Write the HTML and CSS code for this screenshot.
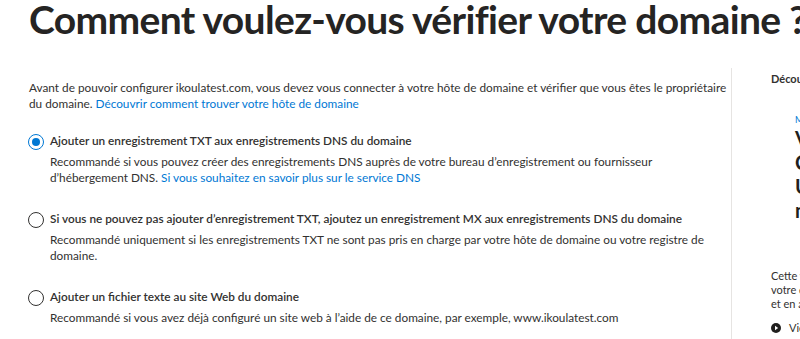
FILE: index.html
```html
<!DOCTYPE html>
<html lang="fr">
<head>
<meta charset="utf-8">
<title>Vérifier le domaine</title>
<link rel="stylesheet" href="styles.css">
</head>
<body>
<div class="page">
  <h1 class="title">Comment voulez-vous vérifier votre domaine ?</h1>
  <div class="layout">
    <main class="main">
      <p class="intro">Avant de pouvoir configurer ikoulatest.com, vous devez vous connecter à votre hôte de domaine et vérifier que vous êtes le propriétaire du domaine. <a class="link" href="#">Découvrir comment trouver votre hôte de domaine</a></p>
      <div class="options">
        <div class="option">
          <span class="radio radio-on"></span>
          <div class="option-body">
            <div class="option-label">Ajouter un enregistrement TXT aux enregistrements DNS du domaine</div>
            <div class="option-desc">Recommandé si vous pouvez créer des enregistrements DNS auprès de votre bureau d’enregistrement ou fournisseur d’hébergement DNS. <a class="link" href="#">Si vous souhaitez en savoir plus sur le service DNS</a></div>
          </div>
        </div>
        <div class="option">
          <span class="radio"></span>
          <div class="option-body">
            <div class="option-label">Si vous ne pouvez pas ajouter d’enregistrement TXT, ajoutez un enregistrement MX aux enregistrements DNS du domaine</div>
            <div class="option-desc">Recommandé uniquement si les enregistrements TXT ne sont pas pris en charge par votre hôte de domaine ou votre registre de domaine.</div>
          </div>
        </div>
        <div class="option">
          <span class="radio"></span>
          <div class="option-body">
            <div class="option-label">Ajouter un fichier texte au site Web du domaine</div>
            <div class="option-desc">Recommandé si vous avez déjà configuré un site web à l’aide de ce domaine, par exemple, www.ikoulatest.com</div>
          </div>
        </div>
      </div>
    </main>
    <aside class="side">
      <div class="side-title">Découvrir</div>
      <div class="card">
        <div class="card-kicker">Microsoft 365</div>
        <div class="card-head">
          <span class="card-line">Vérifier votre</span>
          <span class="card-line">Comment ajouter</span>
          <span class="card-line">Un enregistrement</span>
          <span class="card-line">nom de domaine</span>
        </div>
      </div>
      <p class="side-text">Cette vidéo montre comment vérifier<br>votre domaine auprès de votre hôte<br>et en ajoutant un enregistrement.</p>
      <div class="side-video">
        <svg class="play" width="10" height="10" viewBox="0 0 10 10" aria-hidden="true"><circle cx="5" cy="5" r="5" fill="#201f1e"/><path d="M4 2.8 L7.2 5 L4 7.2 Z" fill="#fff"/></svg>
        <span>Vidéo : vérifier votre domaine</span>
      </div>
    </aside>
  </div>
</div>
</body>
</html>
```
FILE: styles.css
```css
html, body {
  margin: 0;
  padding: 0;
  background: #ffffff;
  overflow: hidden;
}
body {
  font-family: "Lato", "Open Sans", sans-serif;
  color: #323130;
  width: 800px;
  height: 339px;
}
.page {
  padding-left: 29px;
}
.title {
  margin: 0;
  font-size: 39px;
  font-weight: 700;
  line-height: 38px;
  letter-spacing: -0.65px;
  color: #252423;
  white-space: nowrap;
}
.layout {
  display: flex;
  margin-top: 30px;
  height: 280px;
}
.main {
  flex: none;
  box-sizing: border-box;
  width: 703px;
  padding-right: 4px;
  padding-top: 12px;
  border-right: 1px solid #e6e4e2;
}
.intro {
  margin: 0;
  font-size: 11.8px;
  line-height: 16px;
}
.link {
  color: #0078d4;
  text-decoration: none;
}
.options {
  display: flex;
  flex-direction: column;
  gap: 25px;
  margin-top: 21px;
}
.option {
  display: flex;
  gap: 6px;
  margin-left: -1px;
}
.radio {
  flex: none;
  box-sizing: border-box;
  width: 16px;
  height: 16px;
  margin-top: 1px;
  border-radius: 50%;
  border: 1px solid #323130;
  position: relative;
}
.radio-on {
  border: 1.5px solid #0078d4;
}
.radio-on::after {
  content: "";
  position: absolute;
  left: 2.5px;
  top: 2.5px;
  width: 8px;
  height: 8px;
  border-radius: 50%;
  background: #0078d4;
}
.option-label {
  font-size: 11.8px;
  font-weight: 600;
  line-height: 16px;
}
.option-desc {
  margin-top: 5px;
  font-size: 11.8px;
  line-height: 16px;
}
.side {
  flex: 1;
  min-width: 0;
  overflow: hidden;
  padding-left: 39px;
  white-space: nowrap;
}
.side-title {
  font-size: 11px;
  font-weight: 700;
  line-height: 14px;
  padding-top: 4px;
}
.card {
  margin-top: 28px;
  padding-left: 24px;
}
.card-kicker {
  font-size: 9px;
  color: #0078d4;
  line-height: 12px;
}
.card-head {
  display: flex;
  flex-direction: column;
  font-size: 20px;
  font-weight: 700;
  line-height: 24px;
  color: #201f1e;
}
.side-text {
  margin: 47px 0 0;
  font-size: 11px;
  line-height: 14px;
}
.side-video {
  display: flex;
  align-items: center;
  gap: 8px;
  margin-top: 10px;
  padding-left: 0;
  font-size: 11px;
  line-height: 14px;
}
.play {
  flex: none;
}
```
